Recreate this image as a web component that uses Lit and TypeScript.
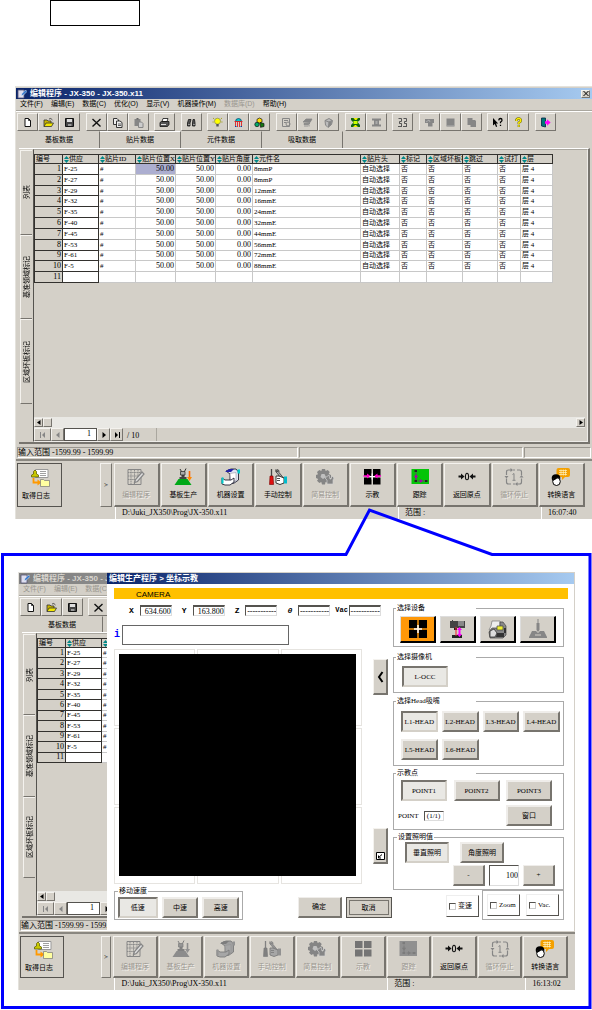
import { LitElement, html, css, svg, nothing } from "lit";
import { customElement, property } from "lit/decorators.js";
import { classMap } from "lit/directives/class-map.js";

const G = "#868686";

/* 11 x 11 toolbar glyphs */
const toolIcons: Record<string, unknown> = {
  new: svg`<path d="M3 1.5h3.5l2 2v6H3z" fill="#fff" stroke="#111"/><path d="M6.5 1.500v2h2" fill="none" stroke="#111" stroke-width=".8"/>`,
  open: svg`<path d="M1 9.500V3h3l1 1h3v2" fill="#c8b400" stroke="#333" stroke-width=".8"/><path d="M1 9.500l2-3.500h7.500l-2 3.500z" fill="#f4e800" stroke="#333" stroke-width=".8"/><path d="M6 2q2-1.500 3.500 1" fill="none" stroke="#333" stroke-width=".8"/>`,
  save: svg`<path d="M1.500 1.500h8v8h-8z" fill="#444" stroke="#111"/><path d="M3 2h5v3H3z" fill="#ddd"/><path d="M4 7h3.500v2H4z" fill="#999"/>`,
  del: svg`<path d="M1.500 2l8 7.500M9.500 2l-8 7.500" stroke="#111" stroke-width="1.400"/>`,
  copy: svg`<path d="M1.500 1.500h3.500l1.500 1.500v4.500h-5z" fill="#eee" stroke="#222" stroke-width=".9"/><path d="M4.500 4h3.500l2 1.500v5H4.500z" fill="#eee" stroke="#222" stroke-width=".9"/><path d="M6 7h3M6 8.500h3" stroke="#222" stroke-width=".7"/>`,
  paste: svg`<path d="M1.500 2h6v7h-6z" fill="${G}"/><path d="M3.500 1h2v1.500h-2z" fill="#666"/><path d="M5.500 5h3l1.500 1.500v4H5.500z" fill="#ccc" stroke="${G}"/>`,
  print: svg`<path d="M4 1.500h5l-1 3H3z" fill="#fff" stroke="#111" stroke-width=".8"/><path d="M1 5.500l1.500-1h7.500v3l-1.500 2H1z" fill="#555" stroke="#111" stroke-width=".8"/><path d="M2 7.500h5" stroke="#ddd"/>`,
  find: svg`<path d="M2.500 2.500l-1 3.500v3h2.500v-3l1-3.500zM7 2.500L6.500 6v3H9V6l-.5-3.500z" fill="#555" stroke="#111" stroke-width=".8"/><path d="M2.500 7.500h1M7.500 7.500h1" stroke="#fff" stroke-width=".8"/>`,
  bulb: svg`<circle cx="5.500" cy="4.200" r="3" fill="#ff0" stroke="#885" stroke-width=".7"/><path d="M4.300 7h2.400v2.500H4.300z" fill="#555"/><path d="M1 1l1.200 1M10 1L8.800 2M.5 5h1.200M9.300 5h1.200" stroke="#990" stroke-width=".8"/>`,
  head: svg`<path d="M2.500 4.500a3 3 0 0 1 6 0z" fill="#0cc" stroke="#036" stroke-width=".7"/><path d="M1.500 4.500h8M2.500 5v5M4.500 5v5M6.500 5v5M8.500 5v5" stroke="#d22" stroke-width=".9"/><path d="M2 9.500h1.500M7.500 9.500h1.500" stroke="#04a"/>`,
  shapes: svg`<path d="M5.500 1l2.500 1.300v2.700L5.500 6.200 3 5V2.300z" fill="#fd0" stroke="#111" stroke-width=".7"/><circle cx="3" cy="7.500" r="2.200" fill="#0a6" stroke="#111" stroke-width=".7"/><path d="M6 5.500l4 1v3l-3.500.8z" fill="#171" stroke="#111" stroke-width=".7"/>`,
  sheetGear: svg`<path d="M1.500 1.500h7v8h-7z" fill="none" stroke="${G}"/><path d="M3 3.500h4M3 5.500h2" stroke="${G}"/><circle cx="7" cy="7" r="2" fill="none" stroke="${G}"/>`,
  feeder: svg`<path d="M1 5l3-3h6L8 5.500zM2 6.500h6l-1.500 1H2zM3 8v2M5 8v2M7 8v1.500" fill="${G}" stroke="${G}" stroke-width=".8"/>`,
  cube: svg`<path d="M2 3.500l4-2 3.500 2-1 4-3.500 3-2.500-2.500z" fill="#bbb" stroke="${G}"/><path d="M2 3.500l4 1.500 3-1.500M6 5l-.5 5" stroke="${G}" fill="none"/><path d="M6 5l3-1-.7 3.500L5.500 10z" fill="${G}"/>`,
  spread: svg`<path d="M1 1h9v2H8v5h2v2H1V8h2V3H1z" fill="#ee0"/><path d="M1 1h2.500L5 3h1.500L8 1h2v2L7.500 5l2.500 3v2H8L6 8H5l-2 2H1V8l2.500-2.500L1 3z" fill="#161"/><path d="M3.500 4h4v3h-4z" fill="#cf0"/>`,
  align: svg`<path d="M1 1.500h9v2H8v4h2v2H1v-2h2v-4H1z" fill="${G}"/><path d="M4.500 4h2v3h-2z" fill="#aaa"/>`,
  swap: svg`<path d="M1.500 1.500h3v3h-2v2h2v3.500M1 9.500h4M6.500 1.500h3v3h-2v2h2v3.500M6 9.500h4M2 5.500l3 2M7 5.500l3 2" stroke="#555" fill="none" stroke-width="1"/>`,
  stepA: svg`<path d="M1 2h9v4H8.500V9.500H4V6H1z" fill="${G}"/><path d="M2 5l3-2 1 2" stroke="#bbb" fill="none" stroke-width=".7"/>`,
  block: svg`<path d="M1.500 1.500h8v8h-8z" fill="${G}"/><path d="M2 8.500h7" stroke="#aaa" stroke-width=".6"/>`,
  pages: svg`<path d="M1.500 1h5v2H9l1 1v6H4.500V8h-3z" fill="${G}"/>`,
  what: svg`<path d="M1 1v7.500l1.800-1.500 1.200 3 1.200-.6L4 6.500h2.200z" fill="#000"/><path d="M6.700 3.300Q7 1.500 8.500 1.500t1.500 1.700Q10 4.300 8.500 5v1.300M8.500 7.700V9" stroke="#000" fill="none" stroke-width="1.300"/>`,
  help: svg`<path d="M3.300 4Q3.300 1.500 5.600 1.500T7.800 3.600Q7.800 5 5.800 5.700v1.500M5.800 8.300v1.500" stroke="#660" fill="none" stroke-width="2.400"/><path d="M3.300 4Q3.300 1.500 5.600 1.500T7.800 3.600Q7.800 5 5.800 5.700v1.500M5.800 8.300v1.500" stroke="#fe0" fill="none" stroke-width="1.400"/>`,
  exit: svg`<path d="M1.500 1h4v9l-4-1z" fill="#077" stroke="#024" stroke-width=".8"/><path d="M5 4.300h2V2.200l3.600 3.300L7 8.800V6.700H5z" fill="#f0f"/>`,
};

const toolGroups: { name: string; label: string }[][] = [
  [["new", "新建"], ["open", "打开"], ["save", "保存"]],
  [["del", "删除"], ["copy", "复制"], ["paste", "粘贴"]],
  [["print", "打印"]],
  [["find", "查找"]],
  [["bulb", "提示"], ["head", "贴片头"], ["shapes", "元件"]],
  [["sheetGear", "检查"], ["feeder", "供料"], ["cube", "立体"]],
  [["spread", "展开"], ["align", "对齐"]],
  [["swap", "替换"]],
  [["stepA", "步骤"], ["block", "块"], ["pages", "页面"]],
  [["what", "这是什么"], ["help", "帮助"]],
  [["exit", "退出"]],
].map((g) => g.map(([name, label]) => ({ name, label })));

/* 20 x 18 glyphs of the large command bar */
const bigIcons: Record<string, unknown> = {
  edit: svg`<path d="M2 1.500h13v15H2z" fill="none" stroke="${G}"/><path d="M2 4.500h13M2 8h11M2 11.500h8M5 2v14M8.500 2v14M12 2v7" stroke="${G}" stroke-width=".9" stroke-dasharray="1.500 .6"/><path d="M8.500 14.500l1-3L16 4l2 2-6.500 7.500z" fill="#ddd" stroke="${G}" stroke-width="1.200"/>`,
  produce: svg`<path d="M1.500 17l4-6h9l4 6z" fill="#00a818"/><path d="M6.500 11V9h2V7h3v2h2v2z" fill="#444"/><path d="M7.500 3.500h4.500V7H7.500z" fill="#aaa" stroke="#222" stroke-width=".7"/><path d="M7 1l1.500 2.500M13 .5l-1.500 3" stroke="#333"/><path d="M16.500 3v7" stroke="#f60" stroke-width="1.600"/><path d="M14 9h5l-2.500 4z" fill="#f80"/>`,
  machine: svg`<path d="M5 3l5-2h5l2.500 3v8l-5 3.500H6l3-3V6z" fill="#dfe3f2" stroke="#223" stroke-width=".9"/><path d="M9 5.500l6-1v8l-5 2z" fill="#fff" stroke="#99a" stroke-width=".6"/><path d="M4 4l4-3h5l-3 3z" fill="#22a"/><path d="M1 10l3 2h6l3-2v4l-4 3H4l-3-1z" fill="#fff" stroke="#223" stroke-width=".9"/><path d="M.5 9.500h2v6h-2zM16.500 1.500h2.500v4h-2.500z" fill="#0cc"/>`,
  manual: svg`<path d="M3.500 1v7" stroke="#444" stroke-width="1.300"/><path d="M2 8h3l.6 8.500H1.500z" fill="#e01010" stroke="#700" stroke-width=".6"/><path d="M8 1.500q-1 3 1.500 4l4 6 2-1.500-4.500-5.500Q11.500 2 9.500 1.500L10 3.500H8.500z" fill="#aaa" stroke="#333" stroke-width=".8"/><path d="M8 8h3l5 2v5l-4 1.500-4-1.500z" fill="#fff" stroke="#222" stroke-width=".9"/><path d="M9 10.500h3M9 12.500h3" stroke="#222" stroke-width=".8"/><path d="M16 8.500h3v7h-3z" fill="#0bc"/>`,
  simple: svg`<path d="M7 1h3l.7 2 2-1 2 2-1 2 2.300 1v3l-2.200.8 1 2.200-2.300 1.800L10.500 14 10 16.500H7L6.300 14l-2 1L2 12.800 3.200 11 1 10V7l2-.8L2 4l2.300-2L6.300 3z" fill="#858585"/><path d="M10 10l2 2v4h6v-4l1-2-2-2-1 3h-1l-1-4z" fill="#858585" stroke="#d4d0c8" stroke-width=".7"/><path d="M6.500 6h3l1.500 3-3 2-2.500-2z" fill="#c4c0b8"/>`,
  teach: svg`<path d="M2 1h7.500v7H2zM11 1h7.500v7H11zM2 9.500h7.500v7H2zM11 9.500h7.500v7H11z" fill="#000"/><path class="accent" d="M1.500 8h4M19 8h-4" stroke="#f0c" stroke-width="1.300"/><path class="accent" d="M5 5.500L8.500 8 5 10.500zM15.500 5.500L12 8l3.500 2.500z" fill="#f0c"/><path class="accent" d="M10.200 5.500v6M7.500 8.500H13" stroke="#fff" stroke-width="1.200"/>`,
  track: svg`<path d="M1.500 1h17.500v15H1.500z" fill="#04c408"/><path d="M6 3v10h10" fill="none" stroke="#909" stroke-width="1" stroke-dasharray="1.500 1"/><path d="M4.500 2h2.500v2H4.500zM4.500 12h2.500v2H4.500zM15 12h2.500v2H15z" fill="#222"/><path d="M4 8l2-1 2 1-2 3zM10 11l3 2-3 2z" fill="#a0a"/>`,
  origin: svg`<path d="M1.500 8.500h4M14.500 8.500h4" stroke="#111" stroke-width="1.800"/><path d="M4 5.500l3.500 3L4 11.500zM16 5.500l-3.500 3 3.500 3z" fill="#111"/><ellipse cx="10" cy="8.500" rx="1.600" ry="3.300" fill="none" stroke="#111" stroke-width="1.100"/>`,
  cycle: svg`<path d="M7 2H4.500Q2.500 2 2.500 4v3M2.500 10.500V14q0 2 2 2H7M13 2h2.500q2 0 2 2v3M17.500 10.500V14q0 2-2 2H13M9 2h2M9 16h2" fill="none" stroke="${G}" stroke-width="1.200"/><path d="M6.500 0v4L9 2zM13.500 14v4L11 16zM.5 8h4l-2 2.500zM15.500 9.500h4l-2-2.500z" fill="${G}"/><path d="M8.500 6.500l1.500-1V12M8.500 12.300h3" fill="none" stroke="${G}"/>`,
  lang: svg`<path d="M7.500 0h9.500q2 0 2 2v5q0 2-2 2h-3l-3 3V9H7.500q-2 0-2-2V2q0-2 2-2z" fill="#f4a000"/><path d="M8 2.500h8M8 4.500h8M8 6.500h8M10 1.500v6M12.300 1.500v6M14.500 1.500v6" stroke="#fff3c0" stroke-width=".7"/><ellipse cx="5" cy="10" rx="4.300" ry="3.800" fill="#000"/><ellipse cx="5.500" cy="13.500" rx="3.800" ry="4" fill="#fff" stroke="#000"/><path d="M1.500 13l2-4 4 .5-3 2z" fill="#000"/>`,
  log: svg`<path d="M5.500 1.500h12.500v8H5.500z" fill="#fff" stroke="#999"/><path d="M10 3.500h6M10 5.500h6M10 7.500h6" stroke="#888" stroke-width=".8"/><path d="M1.500 9V7l2-1V3.500q1.500-3 3 0V6l2 1v2z" fill="#c8c800" stroke="#550" stroke-width=".7"/><path d="M3.500 10v4.500H8" fill="none" stroke="#f90" stroke-width="1.800"/><path d="M7.500 11.500l4 3-4 3z" fill="#f90"/><path d="M10.500 11.500h3l1 1H19.500v6h-9z" fill="#ffffa0" stroke="#777" stroke-width=".7"/>`,
};

const commands = [
  ["edit", "编辑程序"],
  ["produce", "基板生产"],
  ["machine", "机器设置"],
  ["manual", "手动控制"],
  ["simple", "简易控制"],
  ["teach", "示教"],
  ["track", "跟踪"],
  ["origin", "返回原点"],
  ["cycle", "循环停止"],
  ["lang", "转换语言"],
];

const menus = ["文件(F)", "编辑(E)", "数据(C)", "优化(O)", "显示(V)", "机器操作(M)", "数据库(D)", "帮助(H)"];
const tabs = ["基板数据", "贴片数据", "元件数据", "吸取数据"];
const columns = ["供应", "贴片ID", "贴片位置X", "贴片位置Y", "贴片角度", "元件名", "贴片头", "标记", "区域坏板标记", "跳过", "试打", "层"];
const placements = [
  ["F-25", "8mmP"],
  ["F-27", "8mmP"],
  ["F-29", "12mmE"],
  ["F-32", "16mmE"],
  ["F-35", "24mmE"],
  ["F-40", "32mmE"],
  ["F-45", "44mmE"],
  ["F-53", "56mmE"],
  ["F-61", "72mmE"],
  ["F-5", "88mmE"],
];

const shared = css`
  :host {
    --face: #d4d0c8;
    --dark: #808080;
    display: block;
    font: 7px/10px "Liberation Serif", "Noto Sans CJK SC", sans-serif;
    color: #000;
  }
  * {
    box-sizing: border-box;
  }
  button,
  input {
    font: inherit;
    color: inherit;
    margin: 0;
    padding: 0;
    border-radius: 0;
  }
  button {
    background: var(--face);
    border: 1px solid;
    border-color: #f4f2ee #77746e #77746e #f4f2ee;
  }
  svg {
    display: block;
  }
  .title {
    display: flex;
    align-items: center;
    height: 11px;
    font: bold 8px/11px "Liberation Sans", "Noto Sans CJK SC", sans-serif;
    color: #fff;
    white-space: nowrap;
    overflow: hidden;
    background: linear-gradient(90deg, #0a246a, #a6caf0);
  }
`;

@customElement("program-window")
export class ProgramWindow extends LitElement {
  /* An inactive window lies behind a dialog: only its left strip and its command bar stay in view. */
  @property({ type: Boolean, reflect: true }) inactive = false;
  @property() time = "";

  static styles = [
    shared,
    css`
      :host {
        --work: 296px;
        --tabs: 17px;
        --table: 129px;
        background: var(--face);
        border: 1px solid #e4e2dc;
        border-width: 1px 0 0 1px;
        padding-top: 1px;
        overflow: hidden;
      }
      :host([inactive]) {
        --work: 286px;
        --tabs: 16px;
        --table: 125px;
        padding-top: 0;
      }
      .title {
        gap: 3px;
        padding: 0 2px 0 1px;
      }
      :host([inactive]) .title {
        background: linear-gradient(90deg, #808080, #c0c0c0);
        color: #d8d5ce;
      }
      .name {
        flex: 1;
      }
      :host([inactive]) .name {
        flex: none;
        width: 74px;
        overflow: hidden;
      }
      .close {
        width: 9px;
        height: 8px;
        display: grid;
        place-items: center;
      }
      .menu {
        display: flex;
        gap: 8px;
        height: 12px;
        padding-left: 4px;
        border-bottom: 1px solid #aaa79f;
        white-space: nowrap;
        font-family: "Liberation Sans", "Noto Sans CJK SC", sans-serif;
      }
      .dim,
      :host([inactive]) .menu {
        color: #99968f;
      }
      .toolbar {
        display: flex;
        justify-content: space-between;
        height: 20px;
        padding: 1px 36px 1px 1px;
        border-top: 1px solid #fff;
      }
      :host([inactive]) .toolbar {
        padding-right: 20px;
      }
      .group {
        display: flex;
      }
      .tool {
        width: 21px;
        height: 18px;
        display: grid;
        place-items: center;
      }
      .tabs {
        display: flex;
        height: var(--tabs);
        padding-left: 3px;
      }
      .tab {
        width: 81px;
        border-color: transparent #77746e transparent transparent;
        border-width: 1px 1px 0 0;
        background: none;
        font-family: "Liberation Sans", "Noto Sans CJK SC", sans-serif;
      }
      .tab.on {
        border-top-color: #fff;
      }
      .work {
        display: flex;
        min-height: var(--work);
        margin: 0 2px 0 3px;
        border-right: 2px solid #77746e;
        border-bottom: 2px solid #77746e;
        border-top: 1px solid #fff;
      }
      .side {
        display: flex;
        flex-direction: column;
        width: 14px;
        padding: 1px 1px 38px;
      }
      .sidetab {
        flex: 1;
        width: 12px;
        display: grid;
        place-items: center;
        border-right: 0;
      }
      .sidetab span {
        writing-mode: vertical-rl;
        text-orientation: sideways;
        transform: rotate(180deg);
      }
      .pane {
        flex: 1;
        min-width: 0;
        display: flex;
        flex-direction: column;
        border: 1px solid #77746e;
        border-color: #aaa79f #eeece8 #eeece8 #55534f;
        padding: 4px 2px 0 0;
      }
      table {
        border-collapse: collapse;
        table-layout: fixed;
        width: 518px;
        height: var(--table);
        margin-bottom: auto;
      }
      :host([inactive]) table {
        width: 98px;
      }
      th,
      td {
        padding: 0 1px;
        line-height: 8px;
        border: 1px solid #c8c8c8;
        white-space: nowrap;
        overflow: hidden;
        text-align: left;
        font-weight: normal;
      }
      td {
        background: #fff;
      }
      td.num {
        font-size: 8px;
        text-align: right;
      }
      thead th,
      tbody th {
        background: var(--face);
        border-color: #33312e;
      }
      tbody th {
        text-align: right;
        font-size: 8px;
      }
      td.supply {
        border-color: #33312e;
      }
      td.sel {
        background: #acaed0;
      }
      .sort {
        display: inline-block;
        vertical-align: middle;
        width: 5px;
        height: 7px;
      }
      .c0 { width: 28px; }
      .c1 { width: 36px; }
      .c2 { width: 37px; }
      .c3 { width: 40px; }
      .c4 { width: 40px; }
      .c5 { width: 37px; }
      .c6 { width: 108px; }
      .c7 { width: 39px; }
      .c8 { width: 27px; }
      .c9 { width: 36px; }
      .c10 { width: 35px; }
      .c11 { width: 23px; }
      .c12 { width: 32px; }
      .scroll {
        display: flex;
        height: 11px;
        background: #e9e8e4;
        padding: 1px 0;
      }
      .arrow {
        width: 9px;
        display: grid;
        place-items: center;
      }
      .scroll .arrow:last-child {
        margin-left: auto;
      }
      .nav {
        display: flex;
        height: 13px;
      }
      .nav button {
        width: 13px;
        display: grid;
        place-items: center;
      }
      .nav button:first-child {
        width: 17px;
      }
      .nav input {
        width: 33px;
        border: 1px solid #55534f;
        text-align: right;
        padding: 0 5px 2px 0;
        font-size: 8px;
      }
      .total {
        width: 34px;
        padding: 3px 4px 0;
        font-size: 8px;
        border-right: 1px solid #aaa79f;
      }
      .status {
        display: flex;
        height: 11px;
        margin: 3px 0 1px 1px;
        font-size: 8px;
      }
      :host([inactive]) .status {
        margin-top: 2px;
      }
      .cell {
        border: 1px solid;
        border-color: #99968f #fff #fff #99968f;
        line-height: 9px;
        white-space: nowrap;
        margin-right: 1px;
      }
      .s1 { flex: 282; }
      .s2 { flex: 225; }
      .s3 { flex: 66; }
      .commands {
        display: flex;
        height: 48px;
        padding: 2px 6px 0 1px;
        border-top: 2px solid #8a8780;
      }
      :host([inactive]) .commands {
        height: 46px;
      }
      .cmd {
        flex: 43;
        min-width: 0;
        margin-right: 1px;
        display: flex;
        flex-direction: column;
        align-items: center;
        gap: 4px;
        padding-top: 4px;
        border-right-width: 2px;
        border-bottom-width: 2px;
        white-space: nowrap;
        font-family: "Liberation Sans", "Noto Sans CJK SC", sans-serif;
      }
      :host([inactive]) .cmd {
        padding-top: 3px;
      }
      .cmd.log {
        flex: 39;
        border-color: #55534f;
        border-width: 1px;
        align-items: flex-start;
        padding-left: 4px;
      }
      .log svg {
        margin-left: 8px;
      }
      .gap {
        flex: 37;
      }
      .more {
        flex: 9;
        min-width: 0;
        margin-right: 2px;
      }
      .cmd[disabled] {
        color: #99968f;
        text-shadow: 1px 1px #f4f2ee;
      }
      .cmd[disabled] svg {
        filter: grayscale(1);
      }
      .cmd.mono svg {
        filter: grayscale(1) brightness(0.5) contrast(0.3) brightness(1.3);
      }
      .cmd.mono .accent {
        display: none;
      }
      .foot {
        display: flex;
        height: 12px;
        font-size: 8px;
        line-height: 12px;
        padding-right: 6px;
      }
      .foot span {
        border-left: 1px solid #fff;
        padding-left: 6px;
        white-space: nowrap;
      }
      .f0 { flex: 99; }
      .f1 { flex: 276; }
      .f2 { flex: 136; }
      .f3 { flex: 38; }
    `,
  ];

  private command([icon, label]: string[]) {
    const always = ["edit", "simple", "cycle"];
    const live = ["origin", "lang"];
    const off = always.includes(icon) || (this.inactive && !live.includes(icon));
    return html`<button class=${classMap({ cmd: true, mono: off && !always.includes(icon) })} ?disabled=${off}>
      <svg width="20" height="18" viewBox="0 0 20 18">${bigIcons[icon]}</svg>${label}
    </button>`;
  }

  private sortMark() {
    return html`<svg class="sort" viewBox="0 0 5 7"><path d="M0 3L2.500 0 5 3zM0 4L2.500 7 5 4z" fill="#088" /></svg>`;
  }

  render() {
    const heads = this.inactive ? columns.slice(0, 2) : columns;
    return html`
      <div class="title">
        <svg width="10" height="10" viewBox="0 0 10 10">
          <path d="M1 1h6v8H1z" fill="#dde" stroke="#557" stroke-width=".8" />
          <path d="M4 7l1-2.500L8.500 1 10 2.500 6.500 6z" fill="#37c" stroke="#fff" stroke-width=".5" />
        </svg>
        <span class="name">编辑程序 - JX-350 - JX-350.x11</span>
        ${this.inactive
          ? nothing
          : html`<button class="close" aria-label="关闭">
              <svg width="6" height="5" viewBox="0 0 6 5"><path d="M.5 0l5 5M5.500 0l-5 5" stroke="#000" /></svg>
            </button>`}
      </div>
      <nav class="menu">
        ${(this.inactive ? menus.slice(0, 3) : menus).map((m, i) => html`<span class=${i === 6 ? "dim" : ""}>${m}</span>`)}
      </nav>
      <div class="toolbar">
        ${toolGroups.map(
          (g) => html`<div class="group">
            ${g.map(
              (t) => html`<button class="tool" aria-label=${t.label}>
                <svg width="11" height="11" viewBox="0 0 11 11">${toolIcons[t.name]}</svg>
              </button>`
            )}
          </div>`
        )}
      </div>
      <div class="tabs">
        ${(this.inactive ? tabs.slice(0, 1) : tabs).map(
          (t, i) => html`<button class=${classMap({ tab: true, on: i === 1 })}>${t}</button>`
        )}
      </div>
      <div class="work">
        <div class="side">
          ${["列表", "基准领域标记", "区域坏板标记"].map((t) => html`<button class="sidetab"><span>${t}</span></button>`)}
        </div>
        <div class="pane">
          <table>
            <colgroup>
              ${["编号", ...heads].map((_, i) => html`<col class="c${i}" />`)}
            </colgroup>
            <thead>
              <tr>
                <th>编号</th>
                ${heads.map((c) => html`<th>${this.sortMark()}${c}</th>`)}
              </tr>
            </thead>
            <tbody>
              ${placements.map(
                ([feeder, part], i) => html`<tr>
                  <th>${i + 1}</th>
                  <td class="supply">${feeder}</td>
                  <td>#</td>
                  ${this.inactive
                    ? nothing
                    : html`<td class=${classMap({ num: true, sel: i === 0 })}>50.00</td>
                        <td class="num">50.00</td>
                        <td class="num">0.00</td>
                        <td>${part}</td>
                        <td>自动选择</td>
                        <td>否</td>
                        <td>否</td>
                        <td>否</td>
                        <td>否</td>
                        <td>层 4</td>`}
                </tr>`
              )}
              <tr>
                <th>11</th>
                <td class="supply"></td>
                ${heads.slice(1).map(() => html`<td></td>`)}
              </tr>
            </tbody>
          </table>
          <div class="scroll">
            <button class="arrow" aria-label="向左">
              <svg width="4" height="5" viewBox="0 0 4 5"><path d="M3.500 0v5L0 2.500z" /></svg>
            </button>
            <button class="arrow" aria-label="滑块"></button>
            <button class="arrow" aria-label="向右">
              <svg width="4" height="5" viewBox="0 0 4 5"><path d="M.5 0v5L4 2.500z" /></svg>
            </button>
          </div>
          <div class="nav">
            <button aria-label="第一条" disabled>
              <svg width="6" height="6" viewBox="0 0 6 6"><path d="M.5 0v6" stroke="${G}" /><path d="M5 0v6L2 3z" fill="${G}" /></svg>
            </button>
            <button aria-label="上一条" disabled>
              <svg width="6" height="6" viewBox="0 0 6 6"><path d="M4.500 0v6L1 3z" fill="${G}" /></svg>
            </button>
            <input aria-label="记录号" .value=${"1"} />
            <button aria-label="下一条">
              <svg width="6" height="6" viewBox="0 0 6 6"><path d="M1.500 0v6L5 3z" /></svg>
            </button>
            ${this.inactive
              ? nothing
              : html`<button aria-label="最后一条">
                    <svg width="6" height="6" viewBox="0 0 6 6"><path d="M5.500 0v6" stroke="#000" /><path d="M1 0v6l3-3z" /></svg>
                  </button>
                  <span class="total">/ 10</span>`}
          </div>
        </div>
      </div>
      <div class="status">
        <span class="cell s1">输入范围 -1599.99 - 1599.99</span>
        <span class="cell s2"></span>
        <span class="cell s3"></span>
      </div>
      <div class="commands">
        <button class="cmd log">
          <svg width="20" height="19" viewBox="0 0 20 19">${bigIcons.log}</svg>取得日志
        </button>
        <div class="gap"></div>
        <button class="more" aria-label="更多">&gt;</button>
        ${commands.map((c) => this.command(c))}
      </div>
      <div class="foot">
        <div class="f0"></div>
        <span class="f1">D:\\Juki_JX350\\Prog\\JX-350.x11</span>
        <span class="f2">范围 :</span>
        <span class="f3">${this.time || nothing}</span>
      </div>
    `;
  }
}

@customElement("teach-dialog")
export class TeachDialog extends LitElement {
  static styles = [
    shared,
    css`
      :host {
        background: #fff;
        border: 1px solid #d4d0c8;
        border-left: 0;
        border-bottom: 0;
      }
      .title {
        padding-left: 2px;
      }
      .band {
        height: 11px;
        margin: 4px 6px 5px 7px;
        padding-left: 22px;
        background: #ffc000;
        font: 8px/14px "Liberation Sans", sans-serif;
        overflow: hidden;
      }
      .body {
        display: flex;
        padding: 0 10px 0 7px;
        gap: 5px;
      }
      .left {
        flex: 1;
        min-width: 0;
        display: flex;
        flex-direction: column;
        padding: 1px 0 6px;
      }
      .right {
        width: 171px;
      }
      .coords {
        display: flex;
        gap: 10px;
        padding-left: 15px;
        margin-bottom: 8px;
        height: 12px;
      }
      .coords label {
        display: flex;
        gap: 6px;
        font: bold 8px/11px "Liberation Mono", monospace;
      }
      .coords label.tight {
        gap: 1px;
        margin-left: -5px;
        font-size: 7px;
      }
      .coords i {
        font-style: italic;
      }
      .coords input {
        width: 32px;
        height: 11px;
        border: 1px solid;
        border-color: #55534f #ddd #ddd #55534f;
        border-top-width: 2px;
        background: #fff;
        text-align: right;
        font: 8px/8px "Liberation Serif", serif;
      }
      .message {
        display: flex;
        align-items: center;
        gap: 4px;
        height: 20px;
        margin-bottom: 4px;
        color: #00f;
        font: bold 10px/12px "Liberation Mono", monospace;
      }
      .message input {
        flex: 1;
        margin-right: 99px;
        margin-left: -2px;
        height: 20px;
        border: 1px solid #666;
        background: #fff;
      }
      .view {
        display: flex;
        gap: 11px;
        flex: 1;
      }
      .camera {
        flex: 1;
        position: relative;
        display: grid;
        grid-template-columns: repeat(3, 1fr);
        gap: 2px;
        min-height: 235px;
      }
      .camera div {
        border: 1px solid #e6e4e0;
      }
      .camera .image {
        position: absolute;
        inset: 5px 6px 8px 5px;
        background: #000;
        border: 0;
      }
      .strip {
        width: 15px;
        display: flex;
        flex-direction: column;
        justify-content: space-between;
        padding: 10px 0 20px;
      }
      .strip button {
        height: 36px;
        display: grid;
        place-items: center;
        border-right-width: 2px;
        border-bottom-width: 2px;
      }
      .strip button:last-child {
        place-items: end center;
        padding-bottom: 2px;
      }
      fieldset {
        margin: 0;
        padding: 0 3px 3px 6px;
        border: 1px solid #aaa;
        min-width: 0;
      }
      legend {
        line-height: 8px;
        height: 8px;
        padding: 0 1px;
        margin-left: -4px;
        white-space: nowrap;
      }
      .wide legend {
        width: 80px;
      }
      .row {
        display: flex;
        gap: 4px;
      }
      .key {
        height: 21px;
        width: 37px;
        font-family: "Liberation Serif", "Noto Sans CJK SC", serif;
        border: 2px solid;
        border-color: #efedea #77746e #77746e #efedea;
        display: grid;
        place-items: center;
        white-space: nowrap;
      }
      .key.thin {
        border-width: 1px 2px 2px 1px;
      }
      .key.on {
        background: #e9e8e4;
        border-color: #77746e #d4d0c8 #d4d0c8 #77746e;
      }
      .w46 { width: 46px; }
      .w44 { width: 44px; }
      .w40 { width: 40px; }
      .w32 { width: 32px; }
      .devices { margin-bottom: 6px; }
      .devices .row { padding-top: 4px; }
      .device {
        width: 36px;
        height: 27px;
        border: 1px solid;
        border-width: 1px 2px 2px 1px;
        border-color: #ddd #000 #000 #ddd;
        display: grid;
        place-items: center;
      }
      .device.on {
        background: #ff9808;
      }
      .cameras { margin-bottom: 4px; padding: 5px 8px 5px; }
      .heads { margin-bottom: 3px; padding: 6px 3px 5px 7px; }
      .heads .row + .row { margin-top: 7px; }
      .points { margin-bottom: 3px; padding: 3px 11px 3px 7px; }
      .cameras legend { margin-left: -6px; }
      .heads legend,
      .points legend { margin-left: -5px; }
      .points .row { justify-content: space-between; }
      .points .row + .row { margin-top: 4px; align-items: center; gap: 5px; justify-content: flex-start; }
      .points span { margin-left: -3px; }
      .points .row + .row .key { margin-left: auto; }
      .points output {
        width: 20px;
        text-align: center;
        line-height: 8px;
        border: 1px solid;
        border-color: #55534f #ddd #ddd #55534f;
      }
      .light { padding: 1px 8px 3px 11px; }
      .light legend { margin-left: -8px; }
      .light .row { gap: 11px; }
      .light .row + .row { margin-top: 2px; gap: 4px; justify-content: flex-end; }
      .light input {
        width: 30px;
        border: 1px solid #ddd;
        border-color: #55534f #ddd #ddd #55534f;
        text-align: right;
        font-size: 8px;
      }
      .bottom {
        display: flex;
        align-items: flex-end;
        margin-top: -3px;
        padding: 0 10px 7px 7px;
      }
      .speed {
        width: 129px;
        padding: 0 3px 1px;
      }
      .speed legend {
        margin-left: 0;
      }
      .speed .key {
        margin-top: 2px;
      }
      .grow {
        flex: 1;
      }
      .ok {
        display: flex;
        gap: 4px;
        padding-bottom: 2px;
      }
      .cancel {
        border: 1px solid #55534f;
        outline: 1px solid #77746e;
        outline-offset: -4px;
      }
      .check {
        display: flex;
        align-items: center;
        gap: 2px;
        width: 33px;
        height: 22px;
        padding-left: 2px;
        border: 1px solid;
        border-color: #eee #55534f #55534f #eee;
        white-space: nowrap;
      }
      .check input {
        appearance: none;
        width: 7px;
        height: 7px;
        border: 1px solid #aaa;
        border-color: #55534f #ccc #ccc #55534f;
      }
      .checks {
        display: flex;
        gap: 6px;
        padding: 3px 4px;
        margin-left: 3px;
        border: 1px solid #aaa;
      }
      .ok + .grow + .check {
        margin-bottom: 3px;
      }
    `,
  ];

  private coord(name: unknown, value: string, tight = false) {
    return html`<label class=${tight ? "tight" : ""}>${name}<input readonly .value=${value} /></label>`;
  }

  render() {
    return html`
      <div class="title">编辑生产程序 &gt; 坐标示教</div>
      <div class="band">CAMERA</div>
      <div class="body">
        <div class="left">
          <div class="coords">
            ${this.coord("X", "634.600")} ${this.coord("Y", "163.800")} ${this.coord("Z", "-----------")}
            ${this.coord(html`<i>θ</i>`, "-----------")} ${this.coord("Vac", "-----------", true)}
          </div>
          <label class="message">i<input readonly /></label>
          <div class="view">
            <div class="camera">
              ${Array.from({ length: 9 }, () => html`<div></div>`)}
              <div class="image"></div>
            </div>
            <div class="strip">
              <button aria-label="收起">
                <svg width="7" height="12" viewBox="0 0 7 12"><path d="M5.500 1L2 6l3.500 5" fill="none" stroke="#000" stroke-width="2" /></svg>
              </button>
              <button aria-label="放大">
                <svg width="9" height="8" viewBox="0 0 9 8">
                  <path d="M.5.5h8v7h-8z" fill="#fff" stroke="#000" />
                  <path d="M2 6l4-3.500M2.500 3.500V6H5" stroke="#000" fill="none" />
                </svg>
              </button>
            </div>
          </div>
        </div>
        <div class="right">
          <fieldset class="wide devices">
            <legend>选择设备</legend>
            <div class="row">
              <button class="device on" aria-label="摄像机">
                <svg width="20" height="20" viewBox="0 0 20 20">
                  <path d="M1 1h18v18H1z" />
                  <path d="M10 0v20M0 10h20" stroke="#ff9808" stroke-width="1.500" />
                  <path d="M10 6v8M6 10h8" stroke="#fff" stroke-width="1.500" />
                </svg>
              </button>
              <button class="device" aria-label="贴片头">
                <svg width="20" height="20" viewBox="0 0 20 20">
                  <path d="M2 2h2v-1h1v1h12v7H2z" fill="#444" />
                  <path d="M10 2h6v5h-6z" fill="#888" />
                  <path d="M6 9h3v2H6zM4 16h10v3H4z" fill="#222" />
                  <path d="M8 8v9" stroke="#e22" />
                  <path d="M11.500 8l2.500 3h-1.500v4H14l-2.500 3L9 15h1.500v-4H9z" fill="#f0f" />
                </svg>
              </button>
              <button class="device" aria-label="供料器">
                <svg width="20" height="20" viewBox="0 0 20 20">
                  <path d="M4 2h8v5l-3 4H1l2-4z" fill="#eee" stroke="#777" stroke-width=".7" />
                  <path d="M12 3h3l3 4v9l-3 3H2l-1-6 3-4h8z" fill="#888" stroke="#444" stroke-width=".7" />
                  <path d="M9 7h6v4H9z" fill="#ee3" stroke="#444" stroke-width=".7" />
                  <path d="M2 12l4-2 3 4-2 4H2z" fill="#ddd" stroke="#333" stroke-width=".8" />
                  <path d="M9 14h7v4H8zM16 9h2v5h-2z" fill="#333" />
                </svg>
              </button>
              <button class="device" aria-label="吸嘴">
                <svg width="20" height="20" viewBox="0 0 20 20">
                  <path d="M9.500 0h1v4h1v7l-1.500 2-1.500-2V4h1z" fill="${G}" />
                  <path d="M4 12h4l2 2 2-2h4l3 6v1H1v-1z" fill="${G}" />
                  <path d="M7 16h6" stroke="#d4d0c8" />
                </svg>
              </button>
            </div>
          </fieldset>
          <fieldset class="wide cameras">
            <legend>选择摄像机</legend>
            <button class="key on w46">L-OCC</button>
          </fieldset>
          <fieldset class="wide heads">
            <legend>选择Head吸嘴</legend>
            <div class="row">
              ${[1, 2, 3, 4].map((n) => html`<button class="key ${n === 1 ? "on" : ""}">L${n}-HEAD</button>`)}
            </div>
            <div class="row">${[5, 6].map((n) => html`<button class="key">L${n}-HEAD</button>`)}</div>
          </fieldset>
          <fieldset class="wide points">
            <legend>示教点</legend>
            <div class="row">
              ${[1, 2, 3].map((n) => html`<button class="key w46 ${n === 1 ? "on" : ""}">POINT${n}</button>`)}
            </div>
            <div class="row">
              <span>POINT</span><output>(1/1)</output>
              <button class="key w46">窗口</button>
            </div>
          </fieldset>
          <fieldset class="light">
            <legend>设置照明值</legend>
            <div class="row">
              <button class="key on w44">垂直照明</button>
              <button class="key w44">角度照明</button>
            </div>
            <div class="row">
              <button class="key thin w32">-</button>
              <input aria-label="照明值" .value=${"100"} />
              <button class="key thin w32">+</button>
            </div>
          </fieldset>
        </div>
      </div>
      <div class="bottom">
        <fieldset class="speed">
          <legend>移动速度</legend>
          <div class="row">
            <button class="key on w40">低速</button>
            <button class="key">中速</button>
            <button class="key">高速</button>
          </div>
        </fieldset>
        <div class="grow"></div>
        <div class="ok">
          <button class="key thin w44">确定</button>
          <button class="key cancel w46">取消</button>
        </div>
        <div class="grow"></div>
        <label class="check"><input type="checkbox" />变速</label>
        <div class="checks">
          <label class="check"><input type="checkbox" />Zoom</label>
          <label class="check"><input type="checkbox" />Vac.</label>
        </div>
      </div>
    `;
  }
}

@customElement("app-root")
export class AppRoot extends LitElement {
  static styles = css`
    :host {
      display: block;
      background: #fff;
      overflow: hidden;
    }
    .box {
      box-sizing: border-box;
      width: 90px;
      height: 26px;
      margin: 0 0 60px 50px;
      border: 1px solid #000;
    }
    .first {
      margin-left: 15px;
    }
    .detail {
      position: relative;
      padding: 53px 17px 20px 18px;
    }
    .callout {
      position: absolute;
      left: 0;
      top: -12px;
      width: 100%;
      height: calc(100% + 12px);
      z-index: 2;
      pointer-events: none;
    }
    .desk {
      position: relative;
    }
    .dialog {
      position: absolute;
      inset: 0 0 59px 89px;
    }
  `;

  render() {
    return html`
      <div class="box"></div>
      <program-window class="first" time="16:07:40"></program-window>
      <section class="detail">
        <svg class="callout" viewBox="0 0 592 503" preserveAspectRatio="none">
          <path
            d="M2.500 47.500H346L369.500 3L492 47.500H590V500.500H2.500z"
            fill="none"
            stroke="#00f"
            stroke-width="3"
            vector-effect="non-scaling-stroke"
          />
        </svg>
        <div class="desk">
          <program-window inactive time="16:13:02"></program-window>
          <teach-dialog class="dialog"></teach-dialog>
        </div>
      </section>
    `;
  }
}
